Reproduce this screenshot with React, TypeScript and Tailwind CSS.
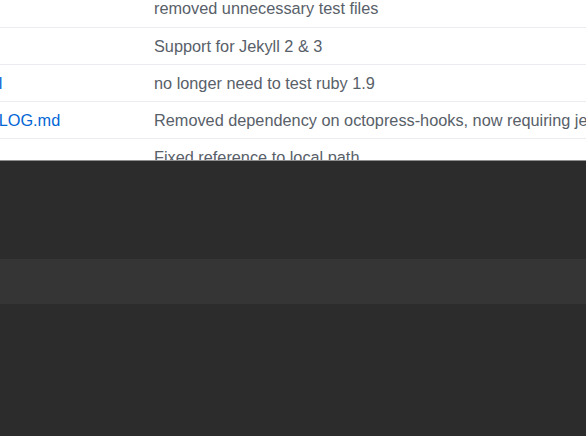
import React from "react";

const rows = [
  { name: "", msg: "removed unnecessary test files" },
  { name: "", msg: "Support for Jekyll 2 & 3" },
  { name: ".travis.yml", msg: "no longer need to test ruby 1.9" },
  { name: "CHANGELOG.md", msg: "Removed dependency on octopress-hooks, now requiring jekyll 3" },
  { name: "", msg: "Fixed reference to local path" },
];

export default function App() {
  return (
    <div
      className="w-[586px] h-[436px] flex flex-col overflow-hidden bg-white"
      style={{ fontFamily: '"Liberation Sans", Arial, sans-serif' }}
    >
      <div className="h-[160px] shrink-0 overflow-hidden">
        <div className="-mt-[10px] -ml-[71px] w-[900px]">
          {rows.map((r, i) => (
            <div
              key={i}
              className={`h-[37px] flex items-center text-[16.3px] whitespace-nowrap ${i === 0 ? "" : "border-t border-[#eaecef]"}`}
            >
              <div className="w-[225px] shrink-0 text-[#0366d6]">{r.name}</div>
              <div className="text-[#586069]">{r.msg}</div>
            </div>
          ))}
        </div>
      </div>
      <div className="flex-1 flex flex-col bg-[#2c2c2c] border-t border-[#8f8f8f]">
        <div className="h-[98px] shrink-0" />
        <div className="h-[45px] shrink-0 bg-[#353535]" />
        <div className="flex-1" />
      </div>
    </div>
  );
}
